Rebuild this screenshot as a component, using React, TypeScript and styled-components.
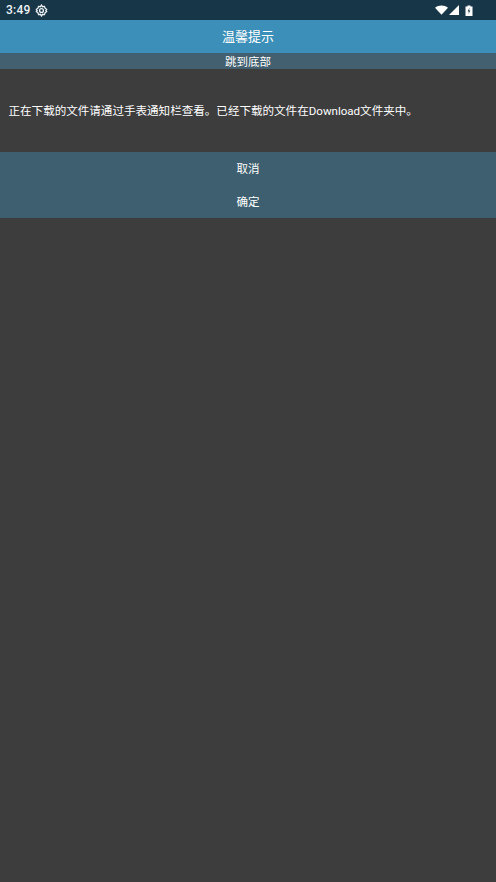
import React from 'react';
import styled, { createGlobalStyle } from 'styled-components';

const GlobalStyle = createGlobalStyle`
  html, body {
    margin: 0;
    padding: 0;
    background: #3d3d3d;
  }
  body {
    font-family: Roboto, "Noto Sans CJK SC", sans-serif;
  }
`;

const Page = styled.div`
  width: 496px;
  height: 882px;
  background: #3d3d3d;
  color: #fff;
  overflow: hidden;
`;

const StatusBar = styled.div`
  height: 20px;
  background: #173748;
  display: flex;
  align-items: center;
  justify-content: space-between;
  padding: 0 23px 0 6px;
`;

const StatusGroup = styled.div`
  display: flex;
  align-items: center;
  gap: ${(p: { $gap: number }) => p.$gap}px;
`;

const Clock = styled.span`
  font-size: 12px;
  font-weight: 500;
  color: #eef2f4;
  letter-spacing: 0.2px;
`;

const TitleBar = styled.div`
  height: 33px;
  padding-bottom: 3px;
  box-sizing: border-box;
  background: #3b8fb8;
  display: flex;
  align-items: center;
  justify-content: center;
  font-size: 13px;
`;

const JumpBar = styled.div`
  height: 16px;
  background: #42606f;
  display: flex;
  align-items: center;
  justify-content: center;
  font-size: 11.5px;
`;

const Message = styled.div`
  height: 83px;
  padding: 0 8.500px 2px;
  box-sizing: border-box;
  display: flex;
  align-items: center;
  font-size: 11.56px;
`;

const ActionList = styled.div`
  background: #3e5f6f;
`;

const ActionButton = styled.div`
  height: 33px;
  padding-bottom: 1px;
  box-sizing: border-box;
  display: flex;
  align-items: center;
  justify-content: center;
  font-size: 11.5px;
`;

const App = () => (
  <Page>
    <GlobalStyle />
    <StatusBar>
      <StatusGroup $gap={5}>
        <Clock>3:49</Clock>
        <svg width="13" height="13" viewBox="0 0 24 24" fill="none" stroke="#eef2f4" strokeWidth="2.4">
          <circle cx="12" cy="12" r="3.600" />
          <path d="M12 2l2 3 3.500-.6 1 3.400 3 2.200-1.500 2 1.500 2-3 2.200-1 3.400-3.500-.6-2 3-2-3-3.500.6-1-3.400-3-2.200 1.500-2-1.500-2 3-2.200 1-3.400 3.500.6z" />
        </svg>
      </StatusGroup>
      <StatusGroup $gap={1}>
        <svg width="13" height="10" viewBox="0 0 14 10">
          <path d="M0 2.500C4 -0.800 10 -0.800 14 2.500L7 10z" fill="#fff" />
        </svg>
        <svg width="10" height="10" viewBox="0 0 11 11">
          <path d="M11 0V11H0z" fill="#fff" />
        </svg>
        <svg width="8" height="11" viewBox="1 0 7 11" style={{ marginLeft: 5 }}>
          <path d="M1 1.500h2V.5h3v1h2v9.500H1z" fill="#fff" />
          <path d="M5 2.500L3.200 6.500h1.200L4 9l1.800-3.500H4.600z" fill="#173748" />
        </svg>
      </StatusGroup>
    </StatusBar>
    <TitleBar>温馨提示</TitleBar>
    <JumpBar>跳到底部</JumpBar>
    <Message>正在下载的文件请通过手表通知栏查看。已经下载的文件在Download文件夹中。</Message>
    <ActionList>
      <ActionButton>取消</ActionButton>
      <ActionButton>确定</ActionButton>
    </ActionList>
  </Page>
);

export default App;
